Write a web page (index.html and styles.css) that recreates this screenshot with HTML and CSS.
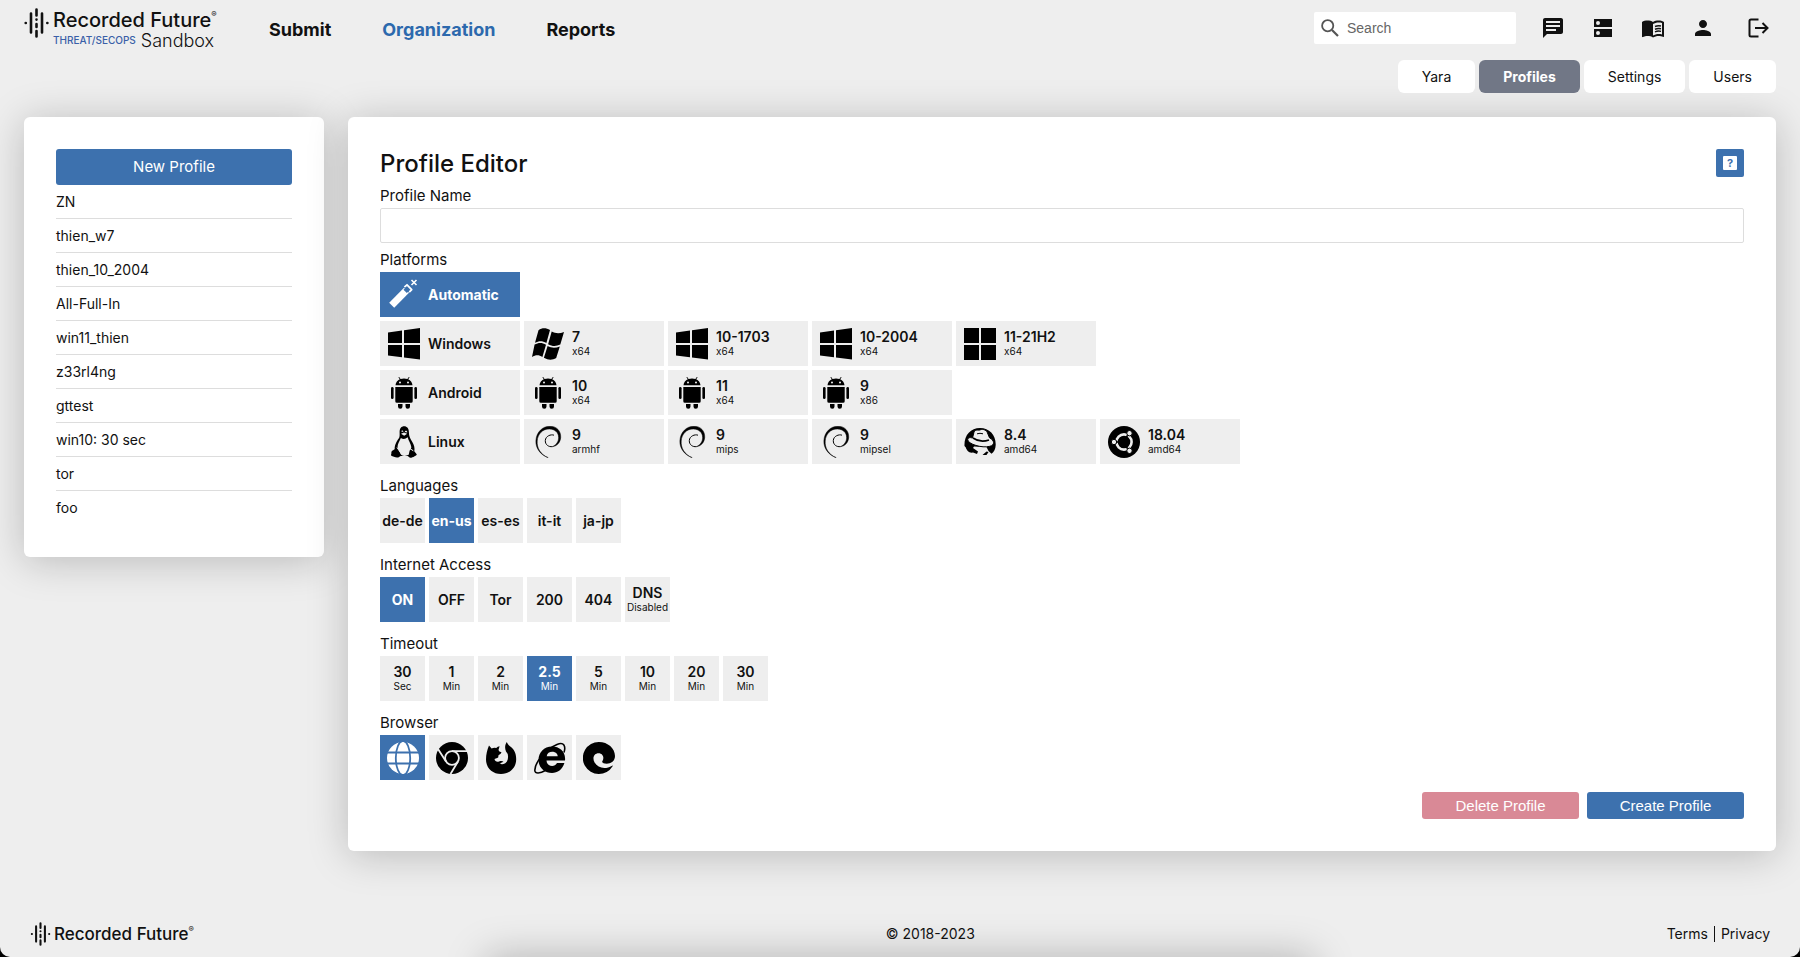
FILE: index.html
```html
<!DOCTYPE html>
<html lang="en">
<head>
<meta charset="utf-8">
<title>Recorded Future Sandbox - Profiles</title>
<link rel="stylesheet" href="styles.css">
</head>
<body>
<svg class="defs" aria-hidden="true">
  <symbol id="mark" viewBox="0 0 25 30"><g stroke="currentColor" stroke-width="2.6" stroke-linecap="round"><path d="M1.7 15h.1M7 5.500v19M12.500 1.500v6M12.500 11.500v.1M12.500 16v3M12.500 23v5.500M18 5.500v19M23.300 15h.1"/></g></symbol>
  <symbol id="win10" viewBox="0 0 32 32"><path d="M0 4.500 14 2.600V15H0zM16 2.300 32 0v15H16zM0 17h14v12.300L0 27.500zM16 17h16v14.500L16 29.400z"/></symbol>
  <symbol id="win11" viewBox="0 0 32 32"><path d="M0 0h15v15H0zM17 0h15v15H17zM0 17h15v15H0zM17 17h15v15H17z"/></symbol>
  <symbol id="win7" viewBox="0 0 32 32"><path d="M6.500 2.200C10-.4 14-.4 18 2l-3.600 13C10.500 12.700 7 12.500 3 14.800zM19.700 3.600c4 2.200 8 2.200 12.300.4l-3.700 12.500c-4 2-8 2-12.200-.3zM2.600 16.600c4-2.300 7.700-2 11.400.1l-3.600 12.200C7 26.700 3.600 26.600 0 29zM15.600 18c4 2.200 8 2.200 12.200.4L24.200 30c-4 2.400-8 2.200-12.300-.3z"/></symbol>
  <symbol id="android" viewBox="0 0 32 32"><path fill-rule="evenodd" d="M7.500 8.300c.3-3 2-4.900 4.300-6L10.400.3l.7-.4 1.500 2.100a11 11 0 0 1 6.800 0L20.900-.1l.7.4-1.400 2c2.300 1.100 4 3 4.300 6zM12 4.500a1 1 0 1 0 0 2 1 1 0 0 0 0-2zm8 0a1 1 0 1 0 0 2 1 1 0 0 0 0-2z"/><path d="M7.300 10h17.400v14.200q0 1.600-1.600 1.600H8.900q-1.600 0-1.600-1.600zM10 27h4.500v2.500a2.200 2.200 0 0 1-4.500 0zM17.500 27H22v2.500a2.200 2.200 0 0 1-4.500 0z"/><rect x="3" y="10" width="2.600" height="12" rx="1.300"/><rect x="26.400" y="10" width="2.600" height="12" rx="1.300"/></symbol>
  <symbol id="linux" viewBox="0 0 32 32"><path d="M11.600 6c0-3.600 1.800-5.700 4.500-5.700 3 0 4.800 2.200 4.800 6 0 4.300 1.200 6 3.400 9.700 1.800 3 2.700 6 2 9.300l2.400 2.900c.7 1-4.600 3.700-6.300 3.500-1.200-.2-1.700-1.200-2.700-1.700h-7c-1.400.8-2.200 1.700-3.700 1.500-1.800-.2-4.500-.8-5.700-1.700-.7-.6.300-2 .1-3.200-.3-1.700 2.400-2.200 3.300-3.500-.3-3.700 2-7.800 4-10.500 1.300-1.900.9-4 .9-6.600z"/><path fill="#eee" d="M13.300 5.500c0-1.400 2-1.400 2 .5zM16.800 5.900c.2-1.800 2.700-1.600 2.400.5zM12.900 12q3.200 2.500 6.800-.7c.7 3.700 3.100 6 3.600 9.700.2 1.500-1 2.300-1.700 3.800l-.9 4q-4.300 2.300-7.600-.1L9.700 22c-.5-3.500 2-7.200 3.200-10z"/><path fill="#eee" d="m13 7.800 3-1.300 3.200 1.300-3 2z"/><path fill="none" stroke="#eee" d="m9 21.500 4.500 6.600M21 22l4.300 2.800"/></symbol>
  <symbol id="debian" viewBox="0 0 32 32"><path stroke="#000" stroke-width=".5" d="M16.200 31.700C8 28.700 3.600 22 3.900 14.800 4.300 6 10.700.2 18 .2c6.800 0 11 5 10.700 11.200-.3 4.800-3.600 8.700-8.200 9.200 3.700-1.600 6.200-5 6.100-9.200C26.500 6.200 23 3.400 17.700 3 10.700 2.600 5.700 8 5.200 15c-.5 7 3.300 13.500 11 16.700z"/><path fill="none" stroke="#000" stroke-width="1" d="M22 9.200C19 8 13.500 10 13.300 14.600c-.2 4 3.300 6.600 7.200 6"/></symbol>
  <symbol id="redhat" viewBox="0 0 32 32"><path d="M.5 20C-.1 9.500 6.500 2 16 2s16 7 15.700 17c-.1 4-1.700 7-4.200 8.800L24.500 25l-2-4L10 20.500l-4 6z"/><path d="M2 22q4-4 7 0l5 3.500-1 2.500-4-1.500q-5 1-7-4.500zM18.500 29l4-3.500 2 .5-2 3z"/><path fill="#eee" stroke="#000" stroke-width="1" d="M8.500 12 10 6.200C11.200 3 14.500 4.600 16 4c2-1.400 6-.4 7.300 2.500l2.200 5.300c5 2.600 5.700 7.300.3 8.500C18 22.500 4 18 3.700 13.700c0-2 2.300-2.600 4.800-1.700z"/><path fill="none" stroke="#000" stroke-width="1.600" d="M9 12q7 5 16 2"/><path fill="none" stroke="#000" d="M13 7.800q3-1 6 0"/></symbol>
  <symbol id="ubuntu" viewBox="0 0 32 32"><circle cx="16" cy="16" r="16"/><circle cx="16" cy="16" r="7.600" fill="none" stroke="#eee" stroke-width="2.600"/><path stroke="#000" stroke-width="1.600" d="M5 16h6M21.500 6.500l-4 6M21.500 25.500l-4-6"/><g fill="#eee" stroke="#000"><circle cx="6" cy="16" r="2.700"/><circle cx="21.500" cy="7.200" r="2.700"/><circle cx="21.500" cy="24.800" r="2.700"/></g></symbol>
  <symbol id="wand" viewBox="0 0 32 32"><g fill="none" stroke="#fff" stroke-linejoin="round"><path stroke-width="7" stroke-linejoin="miter" d="M3.700 26.300 18.500 11.200"/><path stroke-width="1.800" d="m16.400 8.200 2.600-2.400 4.700 4.800-2.500 2.600"/><path stroke-width="1.600" d="m23.500 1 5 5m0-5-5 5"/></g><path fill="#3d71ae" d="m17.700 8.600 3.300 3.300-2.200 2.200-3.300-3.300z"/></symbol>
  <symbol id="globe" viewBox="0 0 32 32"><circle cx="16" cy="16" r="16"/><g fill="none" stroke="#3d71ae" stroke-width="1.800"><path d="M0 10.500h32M0 21.500h32"/><ellipse cx="16" cy="16" rx="7.200" ry="17"/></g></symbol>
  <symbol id="chrome" viewBox="0 0 32 32"><circle cx="16" cy="16" r="16"/><g fill="none" stroke="#eee" stroke-width="1.800"><circle cx="16" cy="16" r="6.900"/><path d="M16 9.100h16M10 19.500 2 7M22 19.500 14.500 32"/></g></symbol>
  <symbol id="firefox" viewBox="0 0 32 32"><path d="M1 17.500C1 12 2.200 8 4 3.500l2.600 3q2.400-1.200 4.600-.5 1.500-1.700 3.400-1.700L13.500 8q.3 1.700 3 2.300-.2 1.700-3 3l-.3 2.200q-1.500.7-3.700 1.500c.4 2.500 2.500 3 4.500 2.400 2.400-.8 3.700-.5 4.500.6-2 .3-2.500 1.400-4 1.800 6 1.800 9-2.700 8.500-7.800q-.2-2.700-2-4.500c-1.500-3.500-1-7 .8-9.500 1 2 1.500 3.300 4.200 5 3.800 3 5.200 7.500 5.200 12.200C31.200 26 24.500 32 16 32S1 26 1 17.500z"/></symbol>
  <symbol id="ie" viewBox="0 0 32 32"><path fill-rule="evenodd" d="M31 18.500H12.500c.2 6 8 7.500 10.500 2.500h7.400C28.500 27.500 23.500 31 18 31 10.500 31 4.500 25.500 4.500 18S10 4.500 18 4.500 32 10 31 18.500zM12.700 14.200h11c-.3-5.700-10.400-6-11 0z"/><path fill="none" stroke="#000" stroke-width="1.600" d="M30 10.500c2-6.500 0-11-7-8C11.500 7.500 1 20 .8 28.200c0 4 5.200 3.400 11 .1"/></symbol>
  <symbol id="edge" viewBox="0 0 32 32"><path d="M16 0c8.800 0 16 6.300 16 14 0 5-4 7.700-8.300 7.700-3 0-5-1.200-4.500-2.300 2.500-3.400.8-8.200-3.600-8.200-4.500 0-6.600 4.500-4 9.300 3.300 5.600 10.500 7.300 17.500 3.200.5-.2.800 0 .5.500A16 16 0 1 1 16 0z"/></symbol>
</svg>
<div class="window">
  <header class="topbar">
    <div class="brand">
      <svg class="brand-mark"><use href="#mark"/></svg>
      <div class="brand-text">
        <div class="brand-name">Recorded Future<sup class="reg">®</sup></div>
        <div class="brand-sub"><span class="brand-tag">THREAT/SECOPS</span><span class="brand-product">Sandbox</span></div>
      </div>
    </div>
    <nav class="nav">
      <a class="nav-link" href="#">Submit</a>
      <a class="nav-link current" href="#">Organization</a>
      <a class="nav-link" href="#">Reports</a>
    </nav>
    <div class="tools">
      <label class="search">
        <svg class="search-icon" viewBox="0 0 18 18" aria-hidden="true"><circle cx="6.700" cy="6.700" r="5.600" fill="none" stroke="#555" stroke-width="1.800"/><path d="m11 11 6 6" stroke="#555" stroke-width="2.200"/></svg>
        <input class="search-input" type="text" placeholder="Search" aria-label="Search">
      </label>
      <div class="tool-icons">
        <a class="tool" href="#" aria-label="Chat"><svg viewBox="0 0 24 24"><path fill-rule="evenodd" d="M4 2h16c1.100 0 2 .9 2 2v12c0 1.100-.9 2-2 2H6l-4 4V4c0-1.100.9-2 2-2zm1 3v2h14V5zm0 4v2h14V9zm0 4v2h10v-2z"/></svg></a>
        <a class="tool" href="#" aria-label="Servers"><svg viewBox="0 0 24 24"><path fill-rule="evenodd" d="M3 3h18v8H3zM3 13h18v8H3zM7 5a2 2 0 1 0 0 4 2 2 0 0 0 0-4zm0 10a2 2 0 1 0 0 4 2 2 0 0 0 0-4z"/></svg></a>
        <a class="tool" href="#" aria-label="Documentation"><svg viewBox="0 0 24 24"><path fill-rule="evenodd" d="M21 5c-1.110-.35-2.330-.5-3.500-.5-1.950 0-4.050.4-5.500 1.500-1.450-1.100-3.550-1.500-5.500-1.500S2.450 4.900 1 6v14.650c0 .25.250.5.500.5.100 0 .150-.05.250-.05C3.100 20.450 5.050 20 6.500 20c1.950 0 4.050.4 5.500 1.500 1.350-.85 3.800-1.500 5.500-1.500 1.650 0 3.350.3 4.750 1.050.1.050.150.050.250.050.250 0 .5-.25.5-.5V6c-.6-.45-1.250-.75-2-1zm0 13.500c-1.100-.35-2.300-.5-3.500-.5-1.700 0-4.150.65-5.500 1.500V8c1.350-.85 3.800-1.500 5.500-1.500 1.200 0 2.400.150 3.500.5z"/><path fill="none" stroke="currentColor" stroke-width="1.500" d="M14 10.500q3-1.300 6-.5M14 13.200q3-1.300 6-.5M14 15.900q3-1.300 6-.5"/></svg></a>
        <a class="tool" href="#" aria-label="Account"><svg viewBox="0 0 24 24"><path d="M12 12c2.200 0 4-1.800 4-4s-1.800-4-4-4-4 1.800-4 4 1.800 4 4 4zm0 2c-2.700 0-8 1.300-8 4v2h16v-2c0-2.700-5.300-4-8-4z"/></svg></a>
        <a class="tool tool-exit" href="#" aria-label="Log out"><svg viewBox="0 0 24 24"><g fill="none" stroke="currentColor" stroke-width="2"><path d="M12.500 3.500H5q-1.500 0-1.500 1.500v14q0 1.500 1.500 1.500h7.500M9 12h12M16.500 7l5 5-5 5"/></g></svg></a>
      </div>
    </div>
  </header>
  <nav class="tabs">
    <a class="tab" href="#">Yara</a>
    <a class="tab active" href="#">Profiles</a>
    <a class="tab" href="#">Settings</a>
    <a class="tab" href="#">Users</a>
  </nav>
  <div class="content">
    <aside class="card sidebar">
      <button class="btn btn-new" type="button">New Profile</button>
      <ul class="profiles">
        <li><a href="#">ZN</a></li>
        <li><a href="#">thien_w7</a></li>
        <li><a href="#">thien_10_2004</a></li>
        <li><a href="#">All-Full-In</a></li>
        <li><a href="#">win11_thien</a></li>
        <li><a href="#">z33rl4ng</a></li>
        <li><a href="#">gttest</a></li>
        <li><a href="#">win10: 30 sec</a></li>
        <li><a href="#">tor</a></li>
        <li><a href="#">foo</a></li>
      </ul>
    </aside>
    <main class="card editor">
      <div class="editor-head">
        <h1 class="title">Profile Editor</h1>
        <button class="help" type="button" aria-label="Help"><span class="help-mark">?</span></button>
      </div>
      <label class="label" for="profile-name">Profile Name</label>
      <input class="name-input" id="profile-name" type="text">
      <section class="group first">
        <h2 class="label">Platforms</h2>
        <div class="row"><button class="tile wide on" type="button"><svg><use href="#wand"/></svg><span><b>Automatic</b></span></button></div>
        <div class="row">
          <button class="tile wide" type="button"><svg><use href="#win10"/></svg><span><b>Windows</b></span></button>
          <button class="tile wide" type="button"><svg><use href="#win7"/></svg><span><b>7</b><small>x64</small></span></button>
          <button class="tile wide" type="button"><svg><use href="#win10"/></svg><span><b>10-1703</b><small>x64</small></span></button>
          <button class="tile wide" type="button"><svg><use href="#win10"/></svg><span><b>10-2004</b><small>x64</small></span></button>
          <button class="tile wide" type="button"><svg><use href="#win11"/></svg><span><b>11-21H2</b><small>x64</small></span></button>
        </div>
        <div class="row">
          <button class="tile wide" type="button"><svg><use href="#android"/></svg><span><b>Android</b></span></button>
          <button class="tile wide" type="button"><svg><use href="#android"/></svg><span><b>10</b><small>x64</small></span></button>
          <button class="tile wide" type="button"><svg><use href="#android"/></svg><span><b>11</b><small>x64</small></span></button>
          <button class="tile wide" type="button"><svg><use href="#android"/></svg><span><b>9</b><small>x86</small></span></button>
        </div>
        <div class="row">
          <button class="tile wide" type="button"><svg><use href="#linux"/></svg><span><b>Linux</b></span></button>
          <button class="tile wide" type="button"><svg><use href="#debian"/></svg><span><b>9</b><small>armhf</small></span></button>
          <button class="tile wide" type="button"><svg><use href="#debian"/></svg><span><b>9</b><small>mips</small></span></button>
          <button class="tile wide" type="button"><svg><use href="#debian"/></svg><span><b>9</b><small>mipsel</small></span></button>
          <button class="tile wide" type="button"><svg><use href="#redhat"/></svg><span><b>8.4</b><small>amd64</small></span></button>
          <button class="tile wide" type="button"><svg><use href="#ubuntu"/></svg><span><b>18.04</b><small>amd64</small></span></button>
        </div>
      </section>
      <section class="group">
        <h2 class="label">Languages</h2>
        <div class="row">
          <button class="tile" type="button"><b>de-de</b></button>
          <button class="tile on" type="button"><b>en-us</b></button>
          <button class="tile" type="button"><b>es-es</b></button>
          <button class="tile" type="button"><b>it-it</b></button>
          <button class="tile" type="button"><b>ja-jp</b></button>
        </div>
      </section>
      <section class="group">
        <h2 class="label">Internet Access</h2>
        <div class="row">
          <button class="tile on" type="button"><b>ON</b></button>
          <button class="tile" type="button"><b>OFF</b></button>
          <button class="tile" type="button"><b>Tor</b></button>
          <button class="tile" type="button"><b>200</b></button>
          <button class="tile" type="button"><b>404</b></button>
          <button class="tile" type="button"><b>DNS</b><small>Disabled</small></button>
        </div>
      </section>
      <section class="group">
        <h2 class="label">Timeout</h2>
        <div class="row">
          <button class="tile" type="button"><b>30</b><small>Sec</small></button>
          <button class="tile" type="button"><b>1</b><small>Min</small></button>
          <button class="tile" type="button"><b>2</b><small>Min</small></button>
          <button class="tile on" type="button"><b>2.5</b><small>Min</small></button>
          <button class="tile" type="button"><b>5</b><small>Min</small></button>
          <button class="tile" type="button"><b>10</b><small>Min</small></button>
          <button class="tile" type="button"><b>20</b><small>Min</small></button>
          <button class="tile" type="button"><b>30</b><small>Min</small></button>
        </div>
      </section>
      <section class="group">
        <h2 class="label">Browser</h2>
        <div class="row">
          <button class="tile on" type="button" aria-label="Default"><svg><use href="#globe"/></svg></button>
          <button class="tile" type="button" aria-label="Chrome"><svg><use href="#chrome"/></svg></button>
          <button class="tile" type="button" aria-label="Firefox"><svg><use href="#firefox"/></svg></button>
          <button class="tile" type="button" aria-label="Internet Explorer"><svg><use href="#ie"/></svg></button>
          <button class="tile" type="button" aria-label="Edge"><svg><use href="#edge"/></svg></button>
        </div>
      </section>
      <div class="actions">
        <button class="btn btn-delete" type="button">Delete Profile</button>
        <button class="btn" type="button">Create Profile</button>
      </div>
    </main>
  </div>
  <footer class="footer">
    <div class="footer-brand"><svg class="footer-mark"><use href="#mark"/></svg><span class="footer-name">Recorded Future<sup class="reg">®</sup></span></div>
    <div class="copyright">© 2018-2023</div>
    <div class="legal"><a href="#">Terms</a><a href="#">Privacy</a></div>
  </footer>
</div>
</body>
</html>
```
FILE: styles.css
```css
* { box-sizing: border-box; }
body { margin: 0; background: #000; color: #111; font: 15px/20px Inter, "Liberation Sans", sans-serif; }
a { color: inherit; text-decoration: none; }
button { border: 0; padding: 0; font: inherit; color: inherit; cursor: pointer; }
.defs { position: absolute; width: 0; height: 0; }
.window { min-height: 100vh; display: flex; flex-direction: column; overflow: hidden; position: relative; background: #eee; border-radius: 0 0 10px 10px; }
.window::after { content: ""; position: absolute; top: 100%; left: 27%; right: 27%; height: 40px; box-shadow: 0 0 40px rgba(0, 0, 0, .26); }

.topbar { display: flex; height: 60px; padding: 0 24px; }
.brand { display: flex; gap: 4px; width: 245px; padding-top: 8px; }
.brand-mark { width: 25px; height: 30px; }
.brand-name { font-size: 20px; line-height: 25px; font-weight: 500; white-space: nowrap; }
.reg { font-size: 8px; line-height: 12px; font-weight: 400; vertical-align: top; }
.brand-sub { display: flex; align-items: center; gap: 5px; line-height: 15px; }
.brand-tag { color: #3a5fa8; font-size: 10px; font-weight: 500; }
.brand-product { font-size: 18px; font-weight: 300; }
.nav { display: flex; gap: 51px; padding-top: 18px; }
.nav-link { font-size: 18px; line-height: 24px; font-weight: 700; }
.nav-link.current { color: #2c69ad; }
.tools { display: flex; gap: 25px; margin-left: auto; padding-top: 12px; }
.search { display: flex; align-items: center; gap: 6px; width: 202px; height: 32px; padding-left: 7px; background: #fff; border-radius: 2px; }
.search-icon { width: 18px; height: 18px; flex: none; }
.search-input { width: 160px; border: 0; outline: 0; background: none; font: 14px/20px "Liberation Sans", Arial, sans-serif; }
.search-input::placeholder { color: #666; }
.tool-icons { display: flex; gap: 26px; padding-top: 4px; }
.tool, .tool svg { display: block; width: 24px; height: 24px; fill: currentColor; }
.tool-exit { margin: 0 6px 0 5px; }

.tabs { display: flex; justify-content: flex-end; gap: 4px; padding: 0 24px; position: relative; z-index: 1; }
.tab { padding: 0 24px; border-radius: 6px; background: #fff; font-size: 14px; line-height: 33px; }
.tab.active { background: #717786; color: #fff; font-weight: 700; }

.content { display: flex; align-items: flex-start; gap: 24px; padding: 24px; }
.card { background: #fff; border-radius: 6px; padding: 32px; box-shadow: 0 4px 40px rgba(0, 0, 0, .22); }
.sidebar { width: 300px; flex: none; }
.editor { flex: 1; }
.btn { width: 157px; background: #3d71ae; color: #fff; border-radius: 3px; font-family: "Liberation Sans", Arial, sans-serif; line-height: 27px; }
.btn-new { width: 100%; font-family: Inter, "Liberation Sans", sans-serif; line-height: 36px; display: block; }
.btn-delete { background: #d98996; }
.profiles { list-style: none; margin: 0; padding: 0; font-size: 14px; }
.profiles li { padding: 7px 0 6px; border-bottom: 1px solid #ddd; }
.profiles li:last-child { border-color: transparent; }
.profiles a { display: block; }

.editor-head { display: flex; justify-content: space-between; height: 36px; }
.title { margin: 0; font-size: 24px; line-height: 30px; font-weight: 500; }
.help { width: 28px; height: 28px; display: grid; place-items: center; background: #3d71ae; border-radius: 2px; }
.help-mark { width: 14px; background: #fff; color: #3d71ae; border-radius: 1px; font-size: 11px; line-height: 14px; font-weight: 700; }
.label { display: block; margin: 0; font-size: 15px; line-height: 21px; height: 23px; font-weight: 400; }
.name-input { display: block; width: 100%; height: 35px; border: 1px solid #ddd; border-radius: 2px; padding: 0 8px; font: inherit; }
.group { display: flex; flex-direction: column; margin-top: 11px; }
.group.first { margin-top: 6px; }
.row { display: flex; flex-wrap: wrap; gap: 4px; }
.row + .row { margin-top: 4px; }
.tile { width: 45px; height: 45px; display: flex; flex-direction: column; align-items: center; justify-content: center; background: #eee; white-space: nowrap; }
.tile.wide { width: 140px; flex-direction: row; justify-content: flex-start; gap: 8px; padding-left: 8px; text-align: left; }
.tile svg { width: 32px; height: 32px; flex: none; overflow: visible; }
.tile b { display: block; font-size: 14px; line-height: 16px; font-weight: 600; }
.tile small { display: block; font-size: 10px; line-height: 13px; font-weight: 400; }
.tile.on { background: #3d71ae; color: #fff; fill: #fff; }
.tile.on b { font-weight: 700; }
.actions { display: flex; justify-content: flex-end; gap: 8px; margin-top: 12px; }

.footer { display: flex; justify-content: space-between; align-items: center; margin-top: auto; padding: 0 30px 11px; font-size: 14px; position: relative; z-index: 1; }
.footer-brand { display: flex; align-items: center; gap: 3px; }
.footer-mark { width: 21px; height: 24px; }
.footer-name { font-size: 17px; line-height: 22px; font-weight: 500; }
.legal { display: flex; line-height: 16px; }
.legal a + a { margin-left: 6px; padding-left: 6px; border-left: 1px solid #111; }
```
